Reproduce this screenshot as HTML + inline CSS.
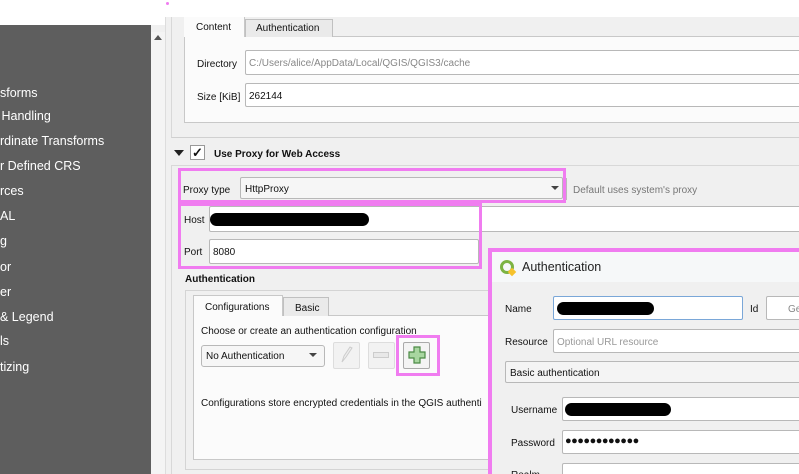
<!DOCTYPE html>
<html style="overflow:hidden;width:799px;height:474px"><head><meta charset="utf-8"><style>
*{box-sizing:border-box;margin:0;padding:0}
body{width:799px;height:474px;overflow:hidden;position:relative;background:#f0f0f0;font-family:"Liberation Sans",sans-serif;font-size:10px;color:#111}
.a{position:absolute}
.inp{position:absolute;background:#fff;border:1px solid #b8b8b8;border-radius:2px}
.t{position:absolute;white-space:nowrap}
.pk{position:absolute;border:3px solid #f07cf0}
.side .t{color:#fff;font-size:12.5px;left:0}
.blob{position:absolute;background:#000;border-radius:7px}
</style></head><body>
<div class="a" style="left:0;top:0;width:799px;height:17px;background:#fff"></div>
<div class="a" style="left:0;top:0;width:165px;height:25px;background:#fff"></div>
<div class="a" style="left:166px;top:2px;width:3px;height:3px;border-radius:50%;background:#f07cf0"></div>
<div class="a side" style="left:0;top:25px;width:151px;height:449px;background:#5e5e5e">
<div class="t" style="top:61px">sforms</div>
<div class="t" style="top:84px;left:-2px">&nbsp;Handling</div>
<div class="t" style="top:109px">rdinate Transforms</div>
<div class="t" style="top:134px">r Defined CRS</div>
<div class="t" style="top:159px">rces</div>
<div class="t" style="top:184px">AL</div>
<div class="t" style="top:209px">g</div>
<div class="t" style="top:235px">or</div>
<div class="t" style="top:260px">er</div>
<div class="t" style="top:285px">&amp; Legend</div>
<div class="t" style="top:309px">ls</div>
<div class="t" style="top:335px">tizing</div>
</div>
<div class="a" style="left:151px;top:32px;width:14px;height:442px;background:#f4f4f4"></div>
<div class="a" style="left:154px;top:35px;width:0;height:0;border-left:4px solid transparent;border-right:4px solid transparent;border-bottom:5px solid #555"></div>
<div class="a" style="left:165px;top:17px;width:1px;height:457px;background:#ddd"></div>
<div class="a" style="left:171px;top:17px;width:628px;height:121px;border-left:1px solid #d8d8d8;border-bottom:1px solid #d0d0d0"></div>
<div class="a" style="left:184px;top:36px;width:615px;height:87px;background:#fbfbfb;border:1px solid #c8c8c8;border-right:none"></div>
<div class="a" style="left:184px;top:17px;width:61px;height:20px;background:#fbfbfb;border-right:1px solid #c8c8c8"></div>
<div class="t" style="left:196px;top:22px">Content</div>
<div class="a" style="left:245px;top:19px;width:88px;height:18px;background:#eaeaea;border:1px solid #c0c0c0;border-bottom:none"></div>
<div class="t" style="left:256px;top:23px">Authentication</div>
<div class="t" style="left:197px;top:59px">Directory</div>
<div class="inp" style="left:245px;top:50px;width:560px;height:25px"></div>
<div class="t" style="left:249px;top:58px;color:#888">C:/Users/alice/AppData/Local/QGIS/QGIS3/cache</div>
<div class="t" style="left:197px;top:92px">Size [KiB]</div>
<div class="inp" style="left:245px;top:83px;width:560px;height:24px"></div>
<div class="t" style="left:249px;top:91px">262144</div>
<div class="a" style="left:174px;top:150px;width:0;height:0;border-left:5px solid transparent;border-right:5px solid transparent;border-top:6px solid #222"></div>
<div class="a" style="left:190px;top:145px;width:15px;height:15px;background:#fff;border:1px solid #999;font-size:13px;line-height:13px;text-align:center;font-weight:bold">✓</div>
<div class="t" style="left:214px;top:149px;font-weight:bold">Use Proxy for Web Access</div>
<div class="a" style="left:171px;top:165px;width:628px;height:309px;border-left:1px solid #d8d8d8;border-top:1px solid #d8d8d8"></div>
<div class="inp" style="left:240px;top:177px;width:323px;height:22px;background:#f6f6f6"></div>
<div class="t" style="left:245px;top:184px">HttpProxy</div>
<div class="a" style="left:551px;top:186px;border-left:4px solid transparent;border-right:4px solid transparent;border-top:4px solid #444"></div>
<div class="a" style="left:566px;top:178px;width:1px;height:22px;background:#bbb"></div>
<div class="t" style="left:573px;top:185px;color:#777">Default uses system's proxy</div>
<div class="pk" style="left:178px;top:168px;width:388px;height:35px"></div>
<div class="t" style="left:183px;top:185px">Proxy type</div>
<div class="inp" style="left:209px;top:206px;width:600px;height:26px"></div>
<div class="blob" style="left:210px;top:213px;width:159px;height:13px"></div>
<div class="inp" style="left:209px;top:239px;width:270px;height:25px"></div>
<div class="t" style="left:213px;top:247px">8080</div>
<div class="pk" style="left:178px;top:203px;width:304px;height:66px"></div>
<div class="t" style="left:184px;top:215px">Host</div>
<div class="t" style="left:184px;top:247px">Port</div>
<div class="t" style="left:185px;top:274px;font-weight:bold">Authentication</div>
<div class="a" style="left:185px;top:290px;width:320px;height:180px;border:1px solid #d4d4d4"></div>
<div class="a" style="left:193px;top:315px;width:310px;height:145px;background:#fbfbfb;border:1px solid #c8c8c8"></div>
<div class="a" style="left:193px;top:295px;width:90px;height:21px;background:#fbfbfb;border:1px solid #c8c8c8;border-bottom:none"></div>
<div class="t" style="left:205px;top:302px">Configurations</div>
<div class="a" style="left:283px;top:297px;width:46px;height:19px;background:#eaeaea;border:1px solid #c0c0c0;border-bottom:none"></div>
<div class="t" style="left:295px;top:303px">Basic</div>
<div class="t" style="left:201px;top:326px">Choose or create an authentication configuration</div>
<div class="inp" style="left:201px;top:345px;width:124px;height:22px;background:#f6f6f6;border-radius:3px"></div>
<div class="t" style="left:206px;top:351px">No Authentication</div>
<div class="a" style="left:309px;top:353px;border-left:4px solid transparent;border-right:4px solid transparent;border-top:4px solid #444"></div>
<div class="inp" style="left:333px;top:342px;width:27px;height:27px;background:#f2f2f2;border-color:#ddd"></div>
<svg class="a" style="left:336px;top:345px" width="20" height="20"><path d="M6 17l2-6 6-9 2 1-6 9z" fill="#eee" stroke="#ccc"/></svg>
<div class="inp" style="left:368px;top:342px;width:27px;height:27px;background:#f2f2f2;border-color:#ddd"></div>
<div class="a" style="left:373px;top:352px;width:16px;height:6px;border:1px solid #ccc;background:#e8e8e8"></div>
<div class="inp" style="left:403px;top:342px;width:27px;height:27px;background:#f4f4f4;border-color:#aaa"></div>
<svg class="a" style="left:407px;top:345px" width="20" height="20" viewBox="0 0 20 20"><path d="M7 2h6v5h5v6h-5v5H7v-5H2V7h5z" fill="#a8d6a0" stroke="#4b8a45" stroke-width="1.2"/></svg>
<div class="pk" style="left:396px;top:335px;width:44px;height:41px"></div>
<div class="t" style="left:201px;top:398px">Configurations store encrypted credentials in the QGIS authenti</div>
<div class="a" style="left:488px;top:248px;width:320px;height:240px;border:4px solid #f07cf0;background:#f0f0f0"></div>
<div class="a" style="left:492px;top:252px;width:310px;height:30px;background:#f6f8f9"></div>
<div class="a" style="left:500px;top:260px;width:14px;height:14px;border-radius:50%;border:3px solid #7cb342"></div>
<div class="a" style="left:509px;top:269px;width:6px;height:6px;background:#f6c22c;transform:rotate(45deg)"></div>
<div class="t" style="left:522px;top:260px;font-size:12.5px;color:#222">Authentication</div>
<div class="t" style="left:505px;top:304px">Name</div>
<div class="inp" style="left:553px;top:296px;width:190px;height:24px;border-color:#7aa7d8"></div>
<div class="blob" style="left:557px;top:302px;width:97px;height:13px"></div>
<div class="t" style="left:750px;top:304px">Id</div>
<div class="inp" style="left:766px;top:296px;width:60px;height:24px"></div>
<div class="t" style="left:788px;top:304px;color:#888">Ge</div>
<div class="t" style="left:505px;top:337px">Resource</div>
<div class="inp" style="left:553px;top:329px;width:260px;height:24px"></div>
<div class="t" style="left:557px;top:337px;color:#999">Optional URL resource</div>
<div class="inp" style="left:505px;top:361px;width:310px;height:22px;background:#f4f4f4"></div>
<div class="t" style="left:510px;top:368px">Basic authentication</div>
<div class="t" style="left:511px;top:405px">Username</div>
<div class="inp" style="left:562px;top:397px;width:250px;height:24px"></div>
<div class="blob" style="left:565px;top:403px;width:106px;height:13px"></div>
<div class="t" style="left:511px;top:438px">Password</div>
<div class="inp" style="left:562px;top:430px;width:250px;height:24px"></div>
<div class="t" style="left:565px;top:435px;font-size:11px;letter-spacing:-0.5px">●●●●●●●●●●●●</div>
<div class="inp" style="left:562px;top:463px;width:250px;height:24px"></div>
<div class="t" style="left:511px;top:470px">Realm</div>
</body></html>
